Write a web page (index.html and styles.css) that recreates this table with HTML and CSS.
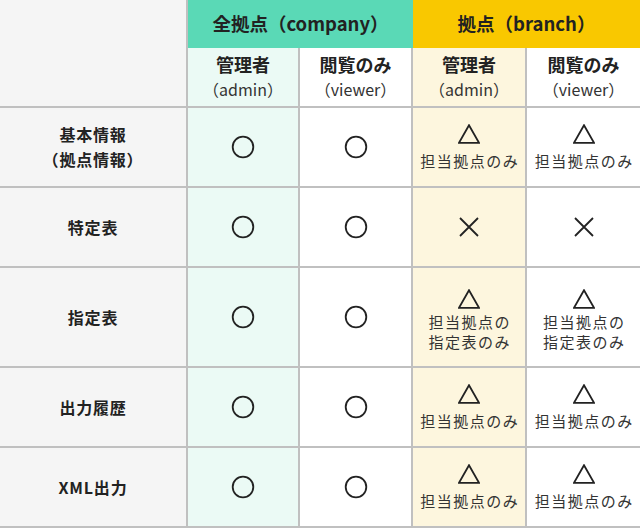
FILE: index.html
```html
<!DOCTYPE html>
<html lang="ja">
<head>
<meta charset="utf-8">
<title>権限表</title>
<link rel="stylesheet" href="styles.css">
</head>
<body>
<div class="matrix">
  <div class="cell corner"></div>
  <div class="cell group group-company">全拠点（company）</div>
  <div class="cell group group-branch">拠点（branch）</div>

  <div class="cell role tint-green"><span class="role-name">管理者</span><span class="role-id">（admin）</span></div>
  <div class="cell role"><span class="role-name">閲覧のみ</span><span class="role-id">（viewer）</span></div>
  <div class="cell role tint-yellow"><span class="role-name">管理者</span><span class="role-id">（admin）</span></div>
  <div class="cell role last"><span class="role-name">閲覧のみ</span><span class="role-id">（viewer）</span></div>

  <!-- 基本情報 -->
  <div class="cell label">基本情報<br>（拠点情報）</div>
  <div class="cell mark tint-green"><svg class="ic-circle" viewBox="0 0 24 24"><circle cx="12" cy="12" r="10.3"/></svg></div>
  <div class="cell mark"><svg class="ic-circle" viewBox="0 0 24 24"><circle cx="12" cy="12" r="10.3"/></svg></div>
  <div class="cell mark note tint-yellow"><svg class="ic-tri" viewBox="0 0 22 20"><polygon points="11,1.2 21,18.8 1,18.8"/></svg><span class="note-text">担当拠点のみ</span></div>
  <div class="cell mark note last"><svg class="ic-tri" viewBox="0 0 22 20"><polygon points="11,1.2 21,18.8 1,18.8"/></svg><span class="note-text">担当拠点のみ</span></div>

  <!-- 特定表 -->
  <div class="cell label">特定表</div>
  <div class="cell mark tint-green"><svg class="ic-circle" viewBox="0 0 24 24"><circle cx="12" cy="12" r="10.3"/></svg></div>
  <div class="cell mark"><svg class="ic-circle" viewBox="0 0 24 24"><circle cx="12" cy="12" r="10.3"/></svg></div>
  <div class="cell mark tint-yellow"><svg class="ic-cross" viewBox="0 0 20 20"><path d="M1 1 L19 19 M19 1 L1 19"/></svg></div>
  <div class="cell mark last"><svg class="ic-cross" viewBox="0 0 20 20"><path d="M1 1 L19 19 M19 1 L1 19"/></svg></div>

  <!-- 指定表 -->
  <div class="cell label">指定表</div>
  <div class="cell mark tint-green"><svg class="ic-circle" viewBox="0 0 24 24"><circle cx="12" cy="12" r="10.3"/></svg></div>
  <div class="cell mark"><svg class="ic-circle" viewBox="0 0 24 24"><circle cx="12" cy="12" r="10.3"/></svg></div>
  <div class="cell mark note note-multi tint-yellow"><svg class="ic-tri" viewBox="0 0 22 20"><polygon points="11,1.2 21,18.8 1,18.8"/></svg><span class="note-text">担当拠点の<br>指定表のみ</span></div>
  <div class="cell mark note note-multi last"><svg class="ic-tri" viewBox="0 0 22 20"><polygon points="11,1.2 21,18.8 1,18.8"/></svg><span class="note-text">担当拠点の<br>指定表のみ</span></div>

  <!-- 出力履歴 -->
  <div class="cell label">出力履歴</div>
  <div class="cell mark tint-green"><svg class="ic-circle" viewBox="0 0 24 24"><circle cx="12" cy="12" r="10.3"/></svg></div>
  <div class="cell mark"><svg class="ic-circle" viewBox="0 0 24 24"><circle cx="12" cy="12" r="10.3"/></svg></div>
  <div class="cell mark note tint-yellow"><svg class="ic-tri" viewBox="0 0 22 20"><polygon points="11,1.2 21,18.8 1,18.8"/></svg><span class="note-text">担当拠点のみ</span></div>
  <div class="cell mark note last"><svg class="ic-tri" viewBox="0 0 22 20"><polygon points="11,1.2 21,18.8 1,18.8"/></svg><span class="note-text">担当拠点のみ</span></div>

  <!-- XML出力 -->
  <div class="cell label">XML出力</div>
  <div class="cell mark tint-green"><svg class="ic-circle" viewBox="0 0 24 24"><circle cx="12" cy="12" r="10.3"/></svg></div>
  <div class="cell mark"><svg class="ic-circle" viewBox="0 0 24 24"><circle cx="12" cy="12" r="10.3"/></svg></div>
  <div class="cell mark note tint-yellow"><svg class="ic-tri" viewBox="0 0 22 20"><polygon points="11,1.2 21,18.8 1,18.8"/></svg><span class="note-text">担当拠点のみ</span></div>
  <div class="cell mark note last"><svg class="ic-tri" viewBox="0 0 22 20"><polygon points="11,1.2 21,18.8 1,18.8"/></svg><span class="note-text">担当拠点のみ</span></div>
</div>
</body>
</html>
```

FILE: styles.css
```css
* {
  box-sizing: border-box;
}

html, body {
  margin: 0;
  padding: 0;
  background: #ffffff;
}

body {
  font-family: "Noto Sans CJK JP", "Noto Sans", sans-serif;
  color: #222222;
}

.matrix {
  display: grid;
  width: 640px;
  grid-template-columns: 188px 112px 113px 114px 113px;
  grid-template-rows: 48px 60px 80px 80px 100px 80px 80px;
}

.cell {
  display: flex;
  flex-direction: column;
  align-items: center;
  justify-content: center;
  text-align: center;
  border-right: 2px solid #c0c0c0;
  border-bottom: 2px solid #c0c0c0;
}

.cell.last {
  border-right: none;
}

.corner {
  grid-row: span 2;
  background: #f5f5f5;
}

.group {
  grid-column: span 2;
  font-size: 18.5px;
  font-weight: 700;
  line-height: 25px;
  border-right: none;
  border-bottom: none;
  padding-bottom: 2px;
}

.group-company {
  background: #5ad9b6;
}

.group-branch {
  background: #f9c800;
}

.role {
  line-height: 25px;
}

.role-name {
  font-size: 18px;
  font-weight: 700;
}

.role-id {
  font-size: 16px;
  font-weight: 400;
  color: #333333;
}

.label {
  background: #f5f5f5;
  font-size: 16px;
  font-weight: 700;
  letter-spacing: 0.05em;
  line-height: 25px;
}

.tint-green {
  background: #ebfaf5;
}

.tint-yellow {
  background: #fdf6de;
}

.mark svg {
  display: block;
  fill: none;
  stroke: #222222;
  stroke-width: 1.8;
}

.ic-circle {
  width: 24px;
  height: 24px;
}

.ic-cross {
  width: 20px;
  height: 20px;
}

.ic-tri {
  width: 22px;
  height: 20px;
}

.note {
  gap: 7px;
}

.note-multi {
  gap: 3px;
  padding-top: 6px;
}

.note-text {
  font-size: 15px;
  line-height: 20px;
  letter-spacing: 0.1em;
  margin-right: -0.1em;
  color: #333333;
}
```
